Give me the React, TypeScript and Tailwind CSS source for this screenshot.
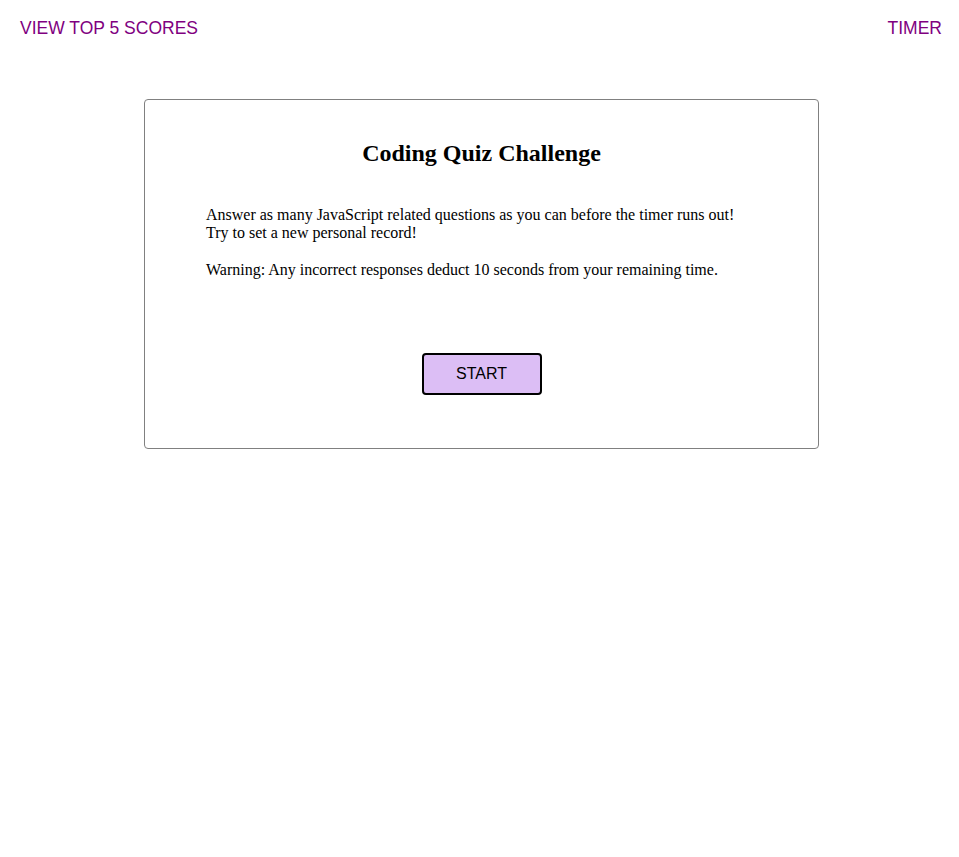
import React from "react";

export default function App() {
  return (
    <div className="min-h-[857px] bg-white">
      <header
        className="flex justify-between pl-5 pr-[17px] pt-[18px] text-[17.5px] leading-[1.15] text-[#800080]"
        style={{ fontFamily: '"Liberation Sans", Arial, sans-serif' }}
      >
        <span>VIEW TOP 5 SCORES</span>
        <span>TIMER</span>
      </header>
      <main
        className="ml-[144px] mt-[61px] w-[675px] h-[350px] rounded-[4px] border border-[#808080] flex flex-col items-center"
        style={{ fontFamily: '"Liberation Serif", "Times New Roman", serif' }}
      >
        <h2 className="mt-[40px] text-[24px] font-bold leading-[1.15] text-black">
          Coding Quiz Challenge
        </h2>
        <p className="mt-[38px] self-start ml-[61px] text-[16px] leading-[1.15] text-black">
          Answer as many JavaScript related questions as you can before the timer runs out!
          <br />
          Try to set a new personal record!
          <br />
          <br />
          Warning: Any incorrect responses deduct 10 seconds from your remaining time.
        </p>
        <button
          className="mt-[74px] w-[120px] h-[42px] rounded-[4px] border-2 border-black bg-[#dcbef5] text-[16px] text-black"
          style={{ fontFamily: '"Liberation Sans", Arial, sans-serif' }}
        >
          START
        </button>
      </main>
    </div>
  );
}
